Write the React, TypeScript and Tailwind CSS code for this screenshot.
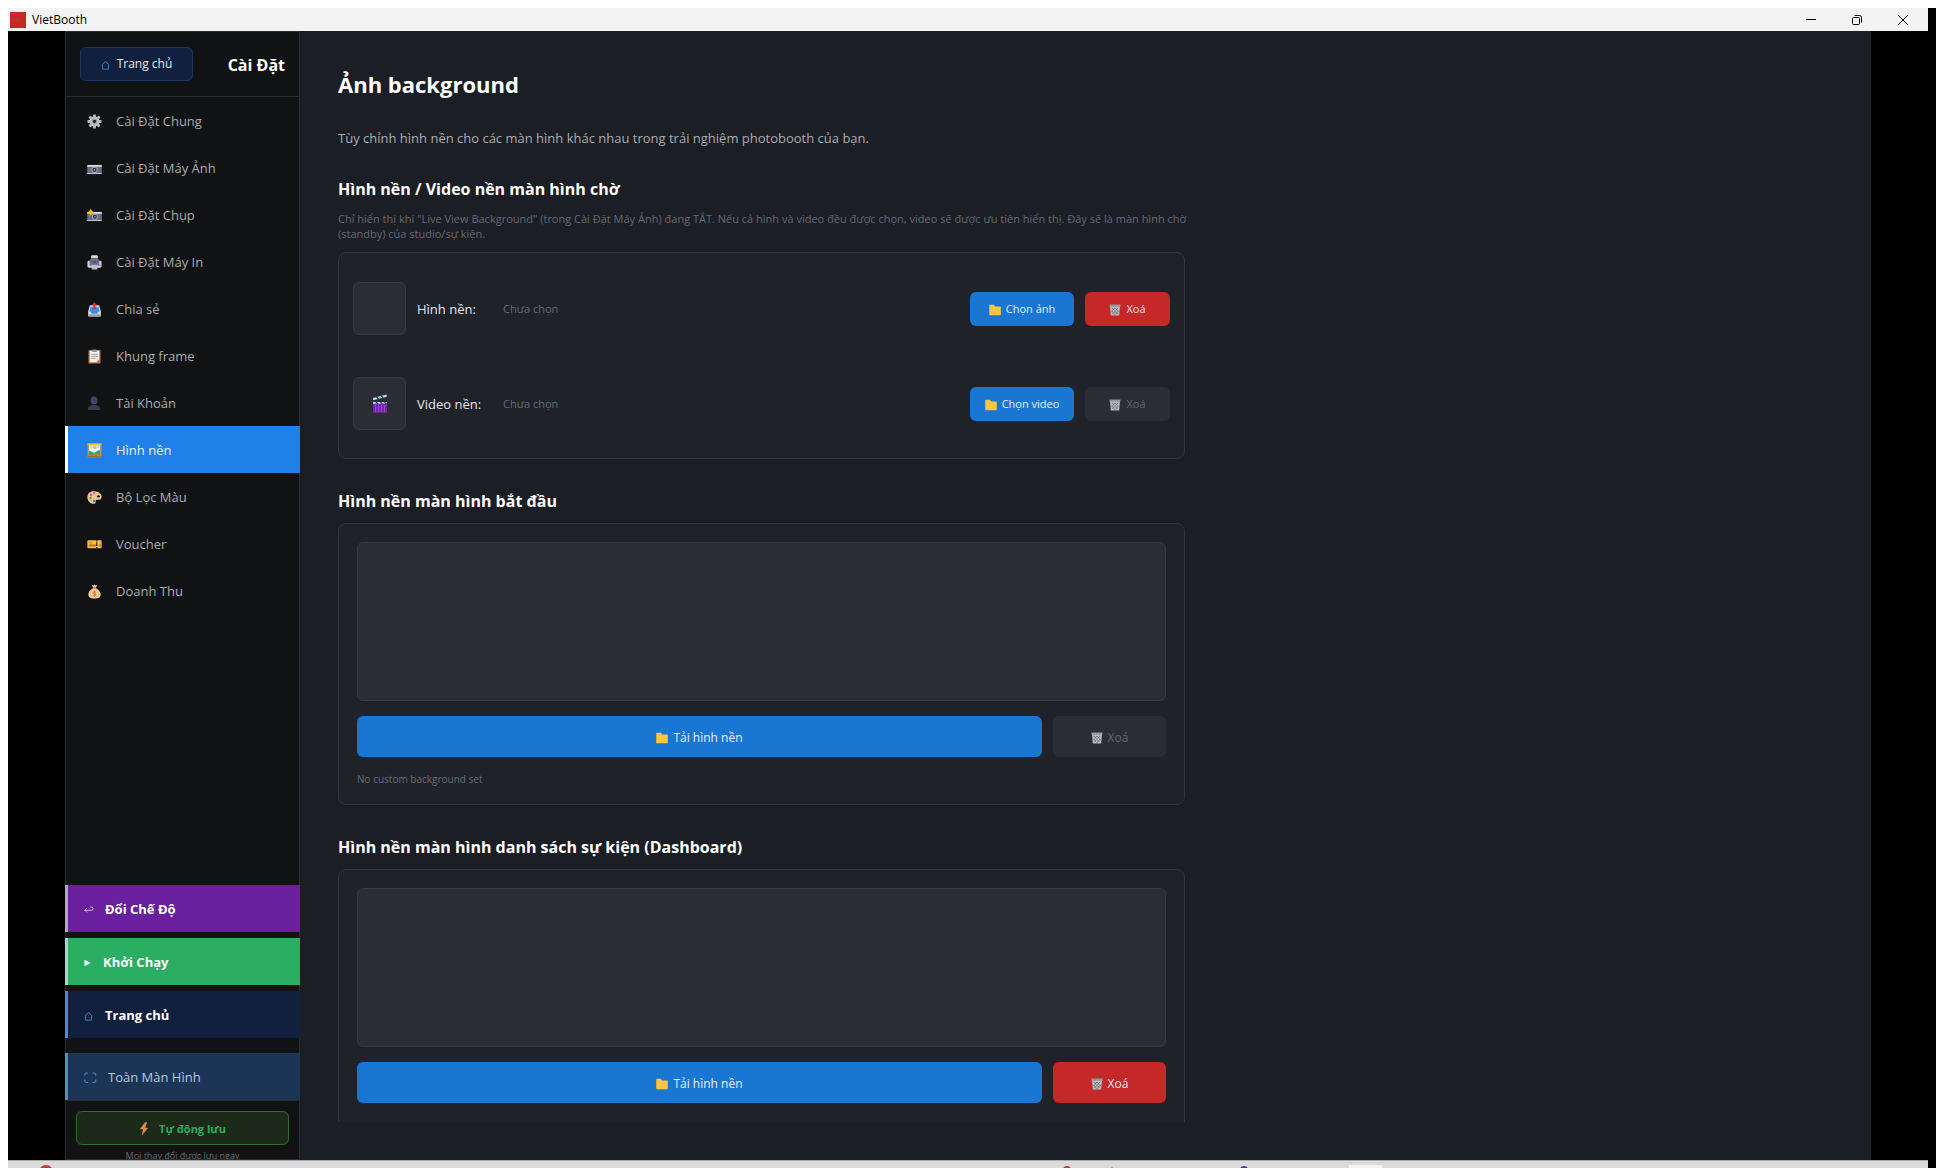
import React, { useState } from 'react';
import clsx from 'clsx';

type IconProps = { className?: string };

function GearIcon({ className }: IconProps) {
  return (
    <svg viewBox="0 0 16 16" className={className}>
      <g fill="#b9bcc0">
        <rect x="6.5" y="0.5" width="3" height="15" rx="0.6" />
        <rect x="6.5" y="0.5" width="3" height="15" rx="0.6" transform="rotate(45 8 8)" />
        <rect x="6.5" y="0.5" width="3" height="15" rx="0.6" transform="rotate(90 8 8)" />
        <rect x="6.5" y="0.5" width="3" height="15" rx="0.6" transform="rotate(135 8 8)" />
        <circle cx="8" cy="8" r="5.3" />
      </g>
      <circle cx="8" cy="8" r="2.6" fill="#8b8e93" />
      <circle cx="8" cy="8" r="1.5" fill="#111214" />
    </svg>
  );
}

function CameraIcon({ className }: IconProps) {
  return (
    <svg viewBox="0 0 16 16" className={className}>
      <rect x="0.3" y="4.2" width="15.4" height="9.6" rx="0.6" fill="#6c6e84" />
      <rect x="0.3" y="4.2" width="15.4" height="2" fill="#dcdde0" />
      <rect x="0.3" y="12.8" width="15.4" height="1" fill="#c9cad0" />
      <circle cx="8" cy="9.4" r="3.3" fill="#a5a7b4" />
      <circle cx="8" cy="9.4" r="2.3" fill="#33343f" />
      <circle cx="8" cy="9.4" r="0.9" fill="#8d90a0" />
    </svg>
  );
}

function FlashCameraIcon({ className }: IconProps) {
  return (
    <svg viewBox="0 0 16 16" className={className}>
      <rect x="0.3" y="4.2" width="15.4" height="9.6" rx="0.6" fill="#6c6e84" />
      <rect x="0.3" y="4.2" width="15.4" height="2" fill="#dcdde0" />
      <rect x="0.3" y="12.8" width="15.4" height="1" fill="#c9cad0" />
      <circle cx="8.4" cy="9.4" r="3.1" fill="#a5a7b4" />
      <circle cx="8.4" cy="9.4" r="2.2" fill="#33343f" />
      <circle cx="8.4" cy="9.4" r="0.9" fill="#8d90a0" />
      <path d="M4 .8l1.400 2.500 2.500 1.400-2.500 1.400L4 8.600 2.600 6.100.1 4.700l2.500-1.400z" fill="#f9b92f" />
    </svg>
  );
}

function PrinterIcon({ className }: IconProps) {
  return (
    <svg viewBox="0 0 16 16" className={className}>
      <rect x="4.500" y="0.300" width="7" height="6" rx="1" fill="#e4e4e8" />
      <rect x="0.500" y="6" width="15" height="7.500" rx="1.500" fill="#d3d4da" />
      <path d="M5 3h6l2.200 3v5.500H2.800V6z" fill="#6b6c85" />
      <rect x="6.300" y="7" width="3.400" height="1" fill="#33343f" />
      <rect x="5" y="10.500" width="6" height="5" fill="#b9bfc6" />
      <rect x="14" y="10.500" width="1.200" height="1.200" fill="#c34db0" />
    </svg>
  );
}

function OutboxIcon({ className }: IconProps) {
  return (
    <svg viewBox="0 0 16 16" className={className}>
      <path d="M3 3.500h10l1.800 6.500v4.200c0 .8-.5 1.300-1.300 1.300h-11c-.8 0-1.300-.5-1.300-1.300V10z" fill="#d6dbe2" />
      <path d="M4 5h8l1.600 5.200-1.600.3-1 2H5l-1-2-1.600-.3z" fill="#3f8fe8" />
      <rect x="1.200" y="13" width="13.600" height="2.500" rx="1" fill="#9aa3ad" />
      <path d="M8 .3l3 3.200H9V8H7V3.500H5z" fill="#d0283a" />
    </svg>
  );
}

function ClipboardIcon({ className }: IconProps) {
  return (
    <svg viewBox="0 0 16 16" className={className}>
      <rect x="1.600" y="1" width="12.800" height="14.500" rx="0.800" fill="#c07a45" />
      <path d="M3 2.200h10v8.600L10 14H3z" fill="#f3f3f5" />
      <path d="M13 10.800L10 14v-3.200z" fill="#cfd0d6" />
      <rect x="5.500" y="0.400" width="5" height="2.800" rx="0.700" fill="#8d929b" />
      <path d="M4.400 5.700h7.200M4.400 7.800h7.200M4.400 9.900h4.800" stroke="#8d929b" strokeWidth="0.900" />
    </svg>
  );
}

function PersonIcon({ className }: IconProps) {
  return (
    <svg viewBox="0 0 16 16" className={className}>
      <ellipse cx="7.500" cy="4.800" rx="3.700" ry="4.300" fill="#3f4a60" />
      <ellipse cx="7.600" cy="4.700" rx="1.600" ry="2" fill="#5a2f80" />
      <path d="M.8 15c0-3.600 2.400-5.400 6.700-5.400s6.700 1.800 6.700 5.400z" fill="#363e50" />
    </svg>
  );
}

function PictureIcon({ className }: IconProps) {
  return (
    <svg viewBox="0 0 16 16" className={className}>
      <rect x="0.500" y="0.500" width="15" height="15" fill="#b88f58" />
      <rect x="0.500" y="0.500" width="15" height="1.700" fill="#f5bf3b" />
      <rect x="2" y="2.200" width="12" height="11" fill="#bfe6fa" />
      <circle cx="8.200" cy="4.800" r="1.800" fill="#f8c23a" />
      <path d="M2.600 5l2.400 1.500 1.500-.6 1.800 1.600L10.500 6l2.900-.9-1.600 4.400H5z" fill="#fff" />
      <path d="M2 8.300l3.300 1 3 1.300 2.600-2.300 3.100-.6v5.700H2z" fill="#2ea866" />
      <path d="M3.500 13.400l3.500-2.700 2.600 1 2-.8 2.100 2.500z" fill="#a3835c" />
      <rect x="0.500" y="13.600" width="15" height="1.900" fill="#a5692f" />
    </svg>
  );
}

function PaletteIcon({ className }: IconProps) {
  return (
    <svg viewBox="0 0 16 16" className={className}>
      <path d="M7 1.200C3 1.200.4 4 .4 7.600c0 4 3 6.800 6.500 7 1.600.1 2.500-.8 2.300-2.200-.2-1.300.6-2 1.800-1.900 2.600.2 4.600-.9 4.600-3.400C15.600 3.400 11.600 1.200 7 1.200z" fill="#f3c592" />
      <circle cx="4.200" cy="5.200" r="1.300" fill="#c352bd" />
      <circle cx="7.600" cy="3.200" r="1.200" fill="#d04fae" />
      <circle cx="3.800" cy="8.500" r="1.300" fill="#2fa66b" />
      <circle cx="7.400" cy="11.700" r="1.400" fill="#3c83d8" />
      <ellipse cx="12.200" cy="6.800" rx="1.600" ry="1.200" fill="#111214" />
    </svg>
  );
}

function TicketIcon({ className }: IconProps) {
  return (
    <svg viewBox="0 0 16 16" className={className}>
      <rect x="0.400" y="3.500" width="15.200" height="8.400" rx="0.800" fill="#f7bd35" />
      <rect x="1.800" y="8" width="8" height="2" fill="#b5713c" />
      <rect x="1.800" y="5.600" width="4" height="1" fill="#c98a38" />
      <rect x="12" y="8" width="3" height="2" fill="#c98a38" />
      <path d="M10.400 3.500v1.200M10.400 5.700v4M10.400 10.700v1.200" stroke="#111214" strokeWidth="1.100" />
    </svg>
  );
}

function MoneyBagIcon({ className }: IconProps) {
  return (
    <svg viewBox="0 0 16 16" className={className}>
      <path d="M5 .8l1.600.7L8 .5l1.400 1L11 .8 9.500 4.200h-3z" fill="#f3c592" />
      <rect x="6.300" y="3.600" width="3.400" height="1.200" fill="#a5653c" />
      <path d="M6.400 4.600h3.200c3 1.600 5 4.200 5 6.700 0 2.800-1.800 4.200-6.600 4.200s-6.600-1.400-6.600-4.200c0-2.500 2-5.100 5-6.700z" fill="#f3c592" />
      <path d="M9.400 8.300H7.700a1 1 0 000 2h.8a1 1 0 010 2.100H6.600M8 7.200v6.300" stroke="#b5713c" strokeWidth="0.900" fill="none" />
    </svg>
  );
}

function ClapperIcon({ className }: IconProps) {
  return (
    <svg viewBox="0 0 16 19" className={className}>
      <path d="M.8 4L14.400 0.600l.5 2.200L1.300 6.200z" fill="#a9d6ee" />
      <path d="M4.500 3.100l2.200 1.800M9 2l2.200 1.800" stroke="#33404d" strokeWidth="1.300" />
      <rect x="1" y="8" width="14" height="2.400" fill="#a9d6ee" />
      <path d="M4 8l2 2.400M8.500 8l2 2.400M12.500 8l2 2.400" stroke="#33404d" strokeWidth="1.200" />
      <rect x="1" y="9.800" width="14" height="9" rx="0.600" fill="#7a22b4" />
      <path d="M3.500 11v7M6.500 11v7M9.500 11v7M12.500 11v7" stroke="#9560bd" strokeWidth="0.700" />
    </svg>
  );
}

function FolderIcon({ className }: IconProps) {
  return (
    <svg viewBox="0 0 12 12" className={className}>
      <path d="M.2 1.400c0-.4.200-.6.600-.6h4l1.400 1.600h5c.4 0 .6.200.6.600v7.600c0 .4-.2.600-.6.600H.8c-.4 0-.6-.2-.6-.6z" fill="#fbc63f" />
      <path d="M.2 1.400v9.200" stroke="#d99c32" strokeWidth="0.600" />
    </svg>
  );
}

function TrashIcon({ className }: IconProps) {
  return (
    <svg viewBox="0 0 12 12" className={className}>
      <path d="M1 2h10l-.8 9.600H1.800z" fill="#b4b9bc" />
      <rect x="0.500" y="0.500" width="11" height="2.200" fill="#8f9a9e" />
      <path d="M3 4l6 6.500M6 4l3.500 3.500M2.700 7l3.300 3.800M9 4l-6 6.500M6 4L2.700 7.500M9.400 7L6 10.800" stroke="#4a4d53" strokeWidth="0.800" strokeDasharray="1 0.800" />
    </svg>
  );
}

function BoltIcon({ className }: IconProps) {
  return (
    <svg viewBox="0 0 10 14" className={className}>
      <path d="M6 .3L.8 7.300H4L2.800 13.700 9.200 5.800H6.200L8 .3z" fill="#e08a4c" />
    </svg>
  );
}

function HouseIcon({ className }: IconProps) {
  return (
    <svg viewBox="0 0 10 10" className={className}>
      <path d="M.8 5.200L4.500 1.200l3.700 4M1.500 4.800v4.400h6V4.800" fill="none" stroke="#3c78b8" strokeWidth="1" />
    </svg>
  );
}

function ReturnIcon({ className }: IconProps) {
  return (
    <svg viewBox="0 0 10 10" className={className}>
      <path d="M.8 5.300h6.400c2.600 0 2.600-3.300 0-3.300H6.200M3 3L.8 5.300 3 7.500" fill="none" stroke="#d8c8e6" strokeWidth="0.900" />
    </svg>
  );
}

function PlayIcon({ className }: IconProps) {
  return (
    <svg viewBox="0 0 8 10" className={className}>
      <path d="M.5 1.800L6.700 5 .5 8.200z" fill="#fff" />
    </svg>
  );
}

function FullscreenIcon({ className }: IconProps) {
  return (
    <svg viewBox="0 0 14 12" className={className}>
      <path d="M.8 3.800V2.200L2 1h2M8.500 1h2l1.200 1.200v1.600M11.700 7.500v1.800l-1.200 1.200h-2M4 10.500H2L.8 9.300V7.500" fill="none" stroke="#4687b8" strokeWidth="1.100" />
    </svg>
  );
}

const navItems = [
  { id: 'general', label: 'Cài Đặt Chung', Icon: GearIcon },
  { id: 'camera', label: 'Cài Đặt Máy Ảnh', Icon: CameraIcon },
  { id: 'capture', label: 'Cài Đặt Chụp', Icon: FlashCameraIcon },
  { id: 'printer', label: 'Cài Đặt Máy In', Icon: PrinterIcon },
  { id: 'share', label: 'Chia sẻ', Icon: OutboxIcon },
  { id: 'frame', label: 'Khung frame', Icon: ClipboardIcon },
  { id: 'account', label: 'Tài Khoản', Icon: PersonIcon },
  { id: 'background', label: 'Hình nền', Icon: PictureIcon },
  { id: 'filter', label: 'Bộ Lọc Màu', Icon: PaletteIcon },
  { id: 'voucher', label: 'Voucher', Icon: TicketIcon },
  { id: 'revenue', label: 'Doanh Thu', Icon: MoneyBagIcon },
];

function TitleBar() {
  return (
    <header className="flex h-[23px] shrink-0 items-center bg-[#f3f3f3] px-0.5 text-black">
      <svg viewBox="0 0 16 16" className="h-4 w-4">
        <rect width="16" height="16" fill="#c62828" />
        <path d="M1 1.500h3M1 3.500h1M3 5.500h1M5 1.500h1M3 7.500h2M6 8.500h1M9 8.500h1" stroke="#8a5a2c" strokeWidth="1" />
      </svg>
      <span className="ml-1.5 text-[12px] leading-4">VietBooth</span>
      <div className="ml-auto flex h-full">
        <button aria-label="Minimize" className="flex w-[46px] items-center justify-center">
          <svg viewBox="0 0 10 10" className="h-2.5 w-2.5">
            <path d="M0 4.500h10" stroke="#000" />
          </svg>
        </button>
        <button aria-label="Restore" className="flex w-[46px] items-center justify-center">
          <svg viewBox="0 0 10 10" className="h-2.5 w-2.5" fill="none" stroke="#000">
            <rect x="0.500" y="2.500" width="7" height="7" rx="1" />
            <path d="M2.500 .5h5a2 2 0 012 2v5" />
          </svg>
        </button>
        <button aria-label="Close" className="flex w-[46px] items-center justify-center">
          <svg viewBox="0 0 10 10" className="h-2.5 w-2.5">
            <path d="M0 0l10 10M10 0L0 10" stroke="#000" />
          </svg>
        </button>
      </div>
    </header>
  );
}

function Sidebar() {
  const [active, setActive] = useState('background');

  return (
    <aside className="flex w-[235px] shrink-0 flex-col border border-[#2a2b33] bg-[#111214]">
      <div className="flex h-[65px] shrink-0 items-center justify-between border-b border-[#2a2b33] px-3.5">
        <button className="flex h-[34px] w-[113px] items-center justify-center gap-1.5 rounded-md border border-[#1c3763] bg-[#11203f] text-[12px] text-[#e4e7ee]">
          <HouseIcon className="mt-0.5 h-2.5 w-2.5" />
          Trang chủ
        </button>
        <h2 className="pt-0.5 text-[16px] font-bold text-white">Cài Đặt</h2>
      </div>

      <nav className="-mx-px flex-1">
        {navItems.map(({ id, label, Icon }) => (
          <button
            key={id}
            onClick={() => setActive(id)}
            className={clsx(
              'flex h-[47px] w-full items-center gap-3.5 border-l-[3px] pt-0.5 pl-[19px] text-[13px]',
              active === id ? 'border-white bg-[#1f80ea] text-[#e9f3fd]' : 'border-transparent text-[#a9abaf]'
            )}
          >
            <Icon className="h-[15px] w-[15px]" />
            {label}
          </button>
        ))}
      </nav>

      <div className="-mx-px flex flex-col gap-1.5 text-[13px] font-bold text-white">
        <button className="flex h-[47px] items-center gap-[11px] border-l-[3px] border-[#b3a6b8] bg-[#6a1f9f] pt-0.5 pl-4">
          <ReturnIcon className="h-2.5 w-2.5" />
          Đổi Chế Độ
        </button>
        <button className="flex h-[47px] items-center gap-[11px] border-l-[3px] border-[#a0d4dc] bg-[#29ae62] pt-0.5 pl-4">
          <PlayIcon className="h-2.5 w-2" />
          Khởi Chạy
        </button>
        <button className="flex h-[47px] items-center gap-[11px] border-l-[3px] border-[#4a86dc] bg-[#11203e] pt-0.5 pl-4">
          <HouseIcon className="h-2.5 w-2.5" />
          Trang chủ
        </button>
      </div>
      <button className="-mx-px mt-[15px] flex h-[47px] shrink-0 items-center gap-2.5 border-l-[3px] border-[#5590b4] bg-[#1c3455] pt-0.5 pl-4 text-[13px] text-[#b4c8da]">
        <FullscreenIcon className="h-3 w-3.5" />
        Toàn Màn Hình
      </button>

      <div className="h-[59px] shrink-0 overflow-hidden border-t border-[#2a2b33] px-2.5 pt-2.5">
        <button className="flex h-[34px] w-full items-center justify-center gap-2.5 rounded-md border border-[#2e6b30] bg-[#1c2a19] pt-0.5 text-[11px] font-bold text-[#29ae62]">
          <BoltIcon className="h-3.5 w-2.5" />
          Tự động lưu
        </button>
        <p className="mt-[3px] text-center text-[9px] leading-4 text-[#66686e]">Mọi thay đổi được lưu ngay</p>
      </div>
    </aside>
  );
}

const deleteOn = 'bg-[#c62828] text-[#f8e6e6]';
const deleteOff = 'bg-[#2b2d34] text-[#66686d]';

function MediaRow({ label, pick, canDelete, icon }: { label: string; pick: string; canDelete: boolean; icon?: React.ReactNode }) {
  return (
    <div className="flex h-[95px] items-center">
      <div className="flex h-[53px] w-[53px] items-center justify-center rounded-md border border-[#373940] bg-[#2b2d34]">{icon}</div>
      <span className="ml-[11px] w-[86px] pt-0.5 text-[13px] text-[#e6e7ea]">{label}</span>
      <span className="flex-1 pt-0.5 text-[11px] text-[#676a73]">Chưa chọn</span>
      <button className="flex h-[34px] w-[104px] items-center justify-center gap-[5px] rounded-md bg-[#1976d2] pt-0.5 text-[11px] text-[#e6f1fb]">
        <FolderIcon className="h-3 w-3" />
        {pick}
      </button>
      <button
        disabled={!canDelete}
        className={clsx('ml-[11px] flex h-[34px] w-[85px] items-center justify-center gap-[5px] rounded-md pt-0.5 text-[11px]', canDelete ? deleteOn : deleteOff)}
      >
        <TrashIcon className="h-3 w-3" />
        Xoá
      </button>
    </div>
  );
}

function BackgroundCard({ canDelete, note }: { canDelete: boolean; note?: string }) {
  return (
    <div className="mt-2.5 rounded-lg border border-[#31343b] bg-[#202229] p-[18px]">
      <div className="h-[159px] rounded-md border border-[#373940] bg-[#2b2d34]" />
      <div className="mt-[15px] flex gap-[11px]">
        <button className="flex h-[41px] flex-1 items-center justify-center gap-[5px] rounded-md bg-[#1976d2] pt-0.5 text-[12px] text-[#e6f1fb]">
          <FolderIcon className="h-3 w-3" />
          Tải hình nền
        </button>
        <button
          disabled={!canDelete}
          className={clsx('flex h-[41px] w-[113px] items-center justify-center gap-[5px] rounded-md pt-0.5 text-[12px]', canDelete ? deleteOn : deleteOff)}
        >
          <TrashIcon className="h-3 w-3" />
          Xoá
        </button>
      </div>
      <p className="mt-4 min-h-[13px] text-[10px] leading-[13px] text-[#6a6c72]">{note}</p>
    </div>
  );
}

export default function App() {
  return (
    <div className="flex h-screen flex-col bg-white pt-2 pl-2 font-['Open_Sans','Noto_Sans',sans-serif]">
      <div className="flex min-h-0 flex-1 flex-col bg-black pr-2">
        <TitleBar />
        <div className="flex min-h-0 flex-1 px-[57px]">
          <Sidebar />
          <main className="flex min-w-0 flex-1 flex-col bg-[#1b1e25] px-[38px] pb-[38px]">
            <div className="min-h-0 flex-1 overflow-hidden pt-[37px]">
              <div className="max-w-[847px]">
                <h1 className="text-[22px] leading-8 font-bold text-white">Ảnh background</h1>
                <p className="mt-7 text-[13px] leading-5 text-[#a9abaf]">
                  Tùy chỉnh hình nền cho các màn hình khác nhau trong trải nghiệm photobooth của bạn.
                </p>

                <h2 className="mt-[29px] text-[16px] leading-6 font-bold text-white">Hình nền / Video nền màn hình chờ</h2>
                <p className="-mr-6 mt-2.5 text-[11px] leading-[15px] text-[#666973]">
                  Chỉ hiển thị khi "Live View Background" (trong Cài Đặt Máy Ảnh) đang TẮT. Nếu cả hình và video đều được chọn, video sẽ được ưu tiên hiển thị. Đây sẽ là màn hình chờ
                  <br />
                  (standby) của studio/sự kiện.
                </p>
                <div className="mt-[11px] rounded-lg border border-[#31343b] bg-[#202229] px-3.5 pt-2 pb-[7px]">
                  <MediaRow label="Hình nền:" pick="Chọn ảnh" canDelete />
                  <MediaRow label="Video nền:" pick="Chọn video" canDelete={false} icon={<ClapperIcon className="h-[19px] w-4" />} />
                </div>

                <h2 className="mt-[30px] text-[16px] leading-6 font-bold text-white">Hình nền màn hình bắt đầu</h2>
                <BackgroundCard canDelete={false} note="No custom background set" />

                <h2 className="mt-[30px] text-[16px] leading-6 font-bold text-white">Hình nền màn hình danh sách sự kiện (Dashboard)</h2>
                <BackgroundCard canDelete />
              </div>
            </div>
          </main>
        </div>

        {/* top edge of the desktop taskbar */}
        <footer className="h-2 shrink-0 overflow-hidden border-t border-[#ababab] bg-[#dadada]">
          <svg viewBox="0 0 1920 7" className="h-[7px] w-full" preserveAspectRatio="none">
            <circle cx="38" cy="11" r="7" fill="#b3403f" />
            <circle cx="1059" cy="9" r="4" fill="#c23b3b" />
            <rect x="1103" y="6" width="2" height="1" fill="#aaa" />
            <circle cx="1236" cy="9" r="4" fill="#4a3a8c" />
            <rect x="1341" y="4" width="33" height="3" fill="#f3f3f3" />
          </svg>
        </footer>
      </div>
    </div>
  );
}
